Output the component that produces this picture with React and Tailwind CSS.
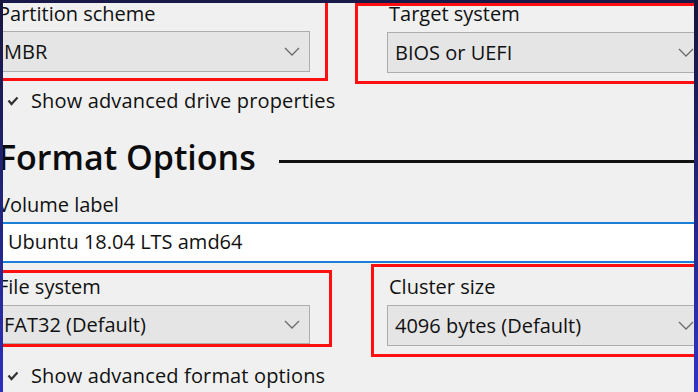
import React from 'react';

function Chevron() {
  return (
    <svg width="16" height="9" viewBox="0 0 16 9" className="shrink-0">
      <polyline points="1,1 8,8 15,1" fill="none" stroke="#6a6a6a" strokeWidth="1.3" />
    </svg>
  );
}

function Check() {
  return (
    <svg width="12" height="10" viewBox="0 0 12 10" className="shrink-0">
      <polyline points="1.5,4.5 4.5,8 10.5,1.5" fill="none" stroke="#333" strokeWidth="2.2" />
    </svg>
  );
}

function Dropdown({ value, className }) {
  return (
    <div className={`flex items-center justify-between border border-[#adadad] bg-[#e5e5e5] pl-[7px] pr-[9px] ${className}`}>
      <span className="leading-[20px]">{value}</span>
      <Chevron />
    </div>
  );
}

function Label({ children, className = '' }) {
  return <div className={`leading-[20px] pl-[2px] ${className}`}>{children}</div>;
}

function Toggle({ children, className = '' }) {
  return (
    <div className={`flex items-center pl-[7px] ${className}`}>
      <Check />
      <span className="ml-[12px] leading-[20px] tracking-[0.15px]">{children}</span>
    </div>
  );
}

export default function App() {
  return (
    <div className="relative w-[698px] h-[392px] overflow-hidden bg-[#f0f0f0] text-[20px] text-[#111] font-['Open_Sans',sans-serif]">
      {/* drive properties row */}
      <div className="flex items-start -mt-[10px]">
        <div className="-ml-[36px] w-[364px] h-[91px] shrink-0 border-[3px] border-[#ff1010] pl-[29px] pt-[11px]">
          <Label>Partition scheme</Label>
          <Dropdown value="MBR" className="mt-[7px] w-[314px] h-[41px]" />
        </div>
        <div className="ml-[27px] mt-[13px] w-[400px] h-[81px] shrink-0 border-[3px] border-[#ff1010] pl-[29px]">
          <Label className="-mt-[2px]">Target system</Label>
          <Dropdown value="BIOS or UEFI" className="mt-[8px] w-[317px] h-[41px]" />
        </div>
      </div>

      <Toggle className="mt-[7px]">Show advanced drive properties</Toggle>

      {/* format options heading */}
      <div className="flex items-start mt-[28px]">
        <div className="-ml-[2px] text-[34px] leading-[36px] font-semibold text-[#0c0c0c]">Format Options</div>
        <div className="flex-1 h-[3px] bg-[#111] mt-[21px] ml-[23px]" />
      </div>

      <Label className="mt-[20px] -ml-[4px]">Volume label</Label>
      <div className="-ml-[10px] w-[720px] h-[41px] mt-[7px] border-2 border-[#1c7fd6] bg-white pl-[16px] pt-[8px]">
        <div className="leading-[20px]">Ubuntu 18.04 LTS amd64</div>
      </div>

      {/* file system row */}
      <div className="flex items-start mt-[1px]">
        <div className="-ml-[36px] mt-[6px] w-[368px] h-[77px] shrink-0 border-[3px] border-[#ff1010] pl-[29px] pt-[4px]">
          <Label>File system</Label>
          <Dropdown value="FAT32 (Default)" className="mt-[8px] w-[314px] h-[39px]" />
        </div>
        <div className="ml-[39px] w-[400px] h-[93px] shrink-0 border-[3px] border-[#ff1010] pl-[13px] pt-[10px]">
          <Label>Cluster size</Label>
          <Dropdown value="4096 bytes (Default)" className="mt-[8px] w-[317px] h-[41px]" />
        </div>
      </div>

      <Toggle className="mt-[9px]">Show advanced format options</Toggle>

      {/* screenshot frame */}
      <div className="absolute left-0 top-0 w-full h-[3px] bg-[#19184a]" />
      <div className="absolute left-0 top-0 w-[3px] h-full bg-gradient-to-b from-[#17163f] to-[#2d2fbe]" />
      <div className="absolute right-0 top-0 w-[4px] h-full bg-gradient-to-b from-[#15143a] to-[#3033c4]" />
    </div>
  );
}
